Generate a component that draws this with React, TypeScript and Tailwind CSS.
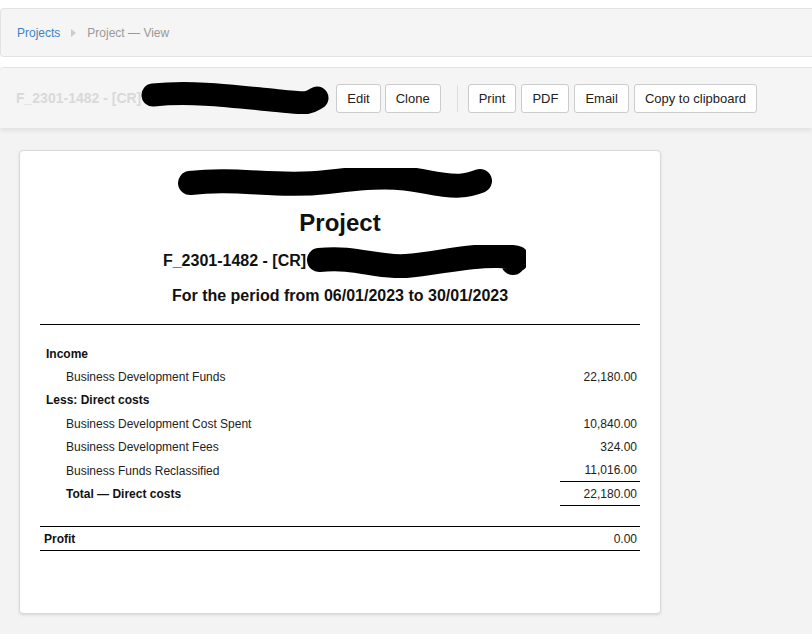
import { Fragment } from "react";

type Row = {
    label: string;
    value?: string;
    kind: "head" | "item" | "total";
    rule?: boolean;
};

const rows: Row[] = [
    { label: "Income", kind: "head" },
    { label: "Business Development Funds", value: "22,180.00", kind: "item" },
    { label: "Less: Direct costs", kind: "head" },
    { label: "Business Development Cost Spent", value: "10,840.00", kind: "item" },
    { label: "Business Development Fees", value: "324.00", kind: "item" },
    { label: "Business Funds Reclassified", value: "11,016.00", kind: "item", rule: true },
    { label: "Total \u2014 Direct costs", value: "22,180.00", kind: "total" },
];

// redaction marker scribble
function Scribble({ w, h, d, sw = 22 }: { w: number; h: number; d: string; sw?: number }) {
    return (
        <svg width={w} height={h} viewBox={`0 0 ${w} ${h}`} className="shrink-0">
            <path d={d} fill="none" stroke="#000" strokeWidth={sw} strokeLinecap="round" strokeLinejoin="round" />
        </svg>
    );
}

function Btn({ children }: { children: string }) {
    return (
        <button className="h-[29px] px-[10px] bg-white border border-[#cccccc] rounded-[3px] text-[13px] text-[#222] leading-none">
            {children}
        </button>
    );
}

function App() {
    return (
        <main className="h-[642px] overflow-hidden bg-white pt-2 font-['Liberation_Sans',Arial,sans-serif]">
            <nav className="h-[49px] flex items-center pl-4 bg-[#f5f5f5] border border-r-0 border-[#e3e3e3] rounded-l-[4px] text-[12px]">
                <span className="text-[#3f82c4]">Projects</span>
                <span className="mx-[11px] w-0 h-0 border-y-[4px] border-y-transparent border-l-[5px] border-l-[#cccccc]" />
                <span className="text-[#999]">Project &mdash; View</span>
            </nav>

            <div className="relative z-10 mt-[10px] h-[61px] flex items-center pl-4 bg-[#f5f5f5] border-t border-[#e3e3e3] rounded-tl-[4px] shadow-[0_3px_4px_rgba(0,0,0,0.07)]">
                <span className="text-[14px] font-bold text-[#d9d9d9]">F_2301-1482 - [CR]</span>
                <Scribble w={188} h={32} sw={23} d="M12 13 C 50 9, 90 14, 130 18 S 166 22, 176 16" />
                <div className="ml-[7px] flex gap-1">
                    <Btn>Edit</Btn>
                    <Btn>Clone</Btn>
                </div>
                <div className="mx-[10px] ml-4 w-px h-[27px] bg-[#dedede]" />
                <div className="flex gap-[5px]">
                    <Btn>Print</Btn>
                    <Btn>PDF</Btn>
                    <Btn>Email</Btn>
                    <Btn>Copy to clipboard</Btn>
                </div>
            </div>

            <div className="bg-[#f3f3f3] pt-[22px] pb-5 pl-[19px]">
                <section className="w-[642px] h-[464px] bg-white border border-[#dadada] rounded-[4px] shadow-[0_1px_3px_rgba(0,0,0,0.12)] px-5 pt-[17px] text-[#111]">
                    <div className="flex justify-center pr-[10px]">
                        <Scribble w={316} h={31} sw={24} d="M13 15 C 60 9, 100 20, 150 14 S 220 8, 250 14 S 290 18, 303 13" />
                    </div>
                    <h1 className="mt-[10px] text-center text-[24px] leading-[28px] font-bold">Project</h1>
                    <div className="mt-2 h-8 flex items-center justify-center pl-[9px]">
                        <span className="text-[16px] font-bold">F_2301-1482 - [CR]</span>
                        <Scribble w={220} h={33} sw={24} d="M13 15 C 50 11, 70 23, 100 21 S 160 10, 192 11 S 207 15, 207 18" />
                    </div>
                    <p className="mt-[9px] text-center text-[16px] leading-5 font-bold">
                        For the period from 06/01/2023 to 30/01/2023
                    </p>
                    <div className="mt-[18px] border-t border-black" />

                    <div className="mt-[17px] text-[12px] text-[#222]">
                        {rows.map((r) => (
                            <Fragment key={r.label}>
                                <div className={`flex items-center ${r.kind === "total" ? "h-6" : "h-[23.4px]"}`}>
                                    <span className={`flex-1 ${r.kind === "head" ? "pl-[6px] font-bold text-[#111]" : r.kind === "total" ? "pl-[26px] font-bold text-[#111]" : "pl-[26px]"}`}>
                                        {r.label}
                                    </span>
                                    {r.value && (
                                        <span className={`w-20 h-full flex items-center justify-end pr-[3px] ${r.rule || r.kind === "total" ? "border-b border-black" : ""}`}>
                                            {r.value}
                                        </span>
                                    )}
                                </div>
                            </Fragment>
                        ))}
                        <div className="mt-5 h-[25px] flex items-center border-y border-black font-bold text-[#111]">
                            <span className="flex-1 pl-1">Profit</span>
                            <span className="pr-[3px] font-normal text-[#222]">0.00</span>
                        </div>
                    </div>
                </section>
            </div>
        </main>
    );
}

export default App;
